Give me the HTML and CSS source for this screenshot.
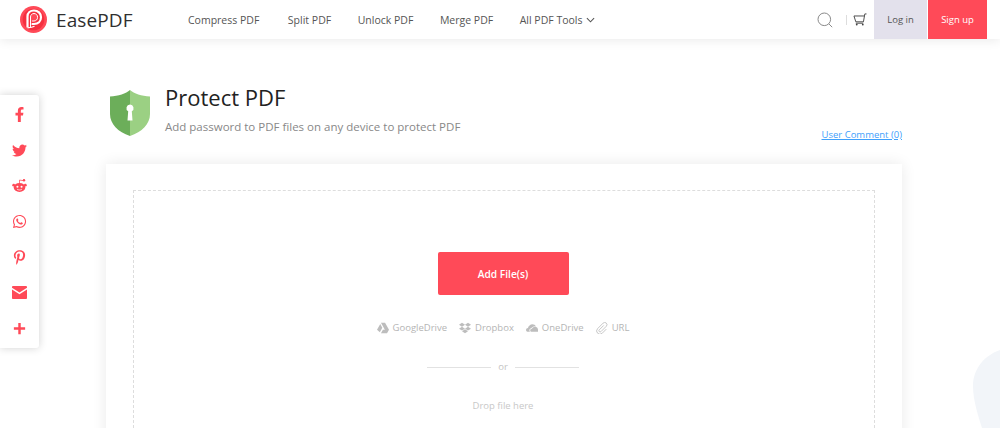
FILE: index.html
```html
<!DOCTYPE html>
<html>
<head>
    <title>Protect PDF - EasePDF</title>
    <link rel="stylesheet" href="styles.css">
</head>
<body>
    <header class="topbar">
        <a class="brand">
            <svg class="brand-logo" viewBox="0 0 27 27">
                <circle cx="13.5" cy="13.5" r="13.5" fill="#ff4a58"/>
                <circle cx="13.5" cy="13.5" r="10.800" fill="#f5303f"/>
                <path d="M7.500 21.500V10.500C7.500 6.800 10.300 4.500 14 4.500c4 0 7 2.800 7 6.800s-3 6.700-7 6.700h-2.500" fill="none" stroke="#fff" stroke-width="2.200"/>
                <path d="M7.500 21.800c3-.2 5.500-.7 7-1.500" fill="none" stroke="#fff" stroke-width="1.300"/>
                <path d="M10.500 21V11c0-2 1.500-3.500 3.500-3.500s3.600 1.600 3.600 3.800-1.600 3.700-3.600 3.700h-2" fill="#ff4a58" stroke="#fff" stroke-width="1"/>
            </svg>
            <span class="brand-name">EasePDF</span>
        </a>
        <nav class="nav">
            <a>Compress PDF</a>
            <a>Split PDF</a>
            <a>Unlock PDF</a>
            <a>Merge PDF</a>
            <a class="nav-all">All PDF Tools
                <svg class="chevron" viewBox="0 0 10 6"><path d="M1 1l4 4 4-4" fill="none" stroke="#555" stroke-width="1.200"/></svg>
            </a>
        </nav>
        <div class="top-actions">
            <svg class="icon-search" viewBox="0 0 16 16">
                <circle cx="7.300" cy="7.300" r="6.300" fill="none" stroke="#8a8a8a" stroke-width="1"/>
                <path d="M11.800 11.800l3.400 3.400" stroke="#8a8a8a" stroke-width="1"/>
            </svg>
            <span class="divider"></span>
            <svg class="icon-cart" viewBox="0 0 15 14">
                <path d="M14.500 1h-1.800l-1.500 8.500H3L1 3.200h11.200" fill="none" stroke="#444" stroke-width="1"/>
                <path d="M3 11h8" stroke="#444" stroke-width="1"/>
                <circle cx="4" cy="12.500" r="1" fill="#444"/>
                <circle cx="10.500" cy="12.500" r="1" fill="#444"/>
            </svg>
            <a class="btn-login">Log in</a>
            <a class="btn-signup">Sign up</a>
        </div>
    </header>

    <aside class="share">
        <svg viewBox="0 0 320 512"><path d="M279.14 288l14.22-92.66h-88.91v-60.13c0-25.35 12.42-50.06 52.24-50.06h40.42V6.26S260.43 0 225.36 0c-73.22 0-121.08 44.38-121.08 124.72v70.62H22.89V288h81.39v224h100.17V288z"/></svg>
        <svg viewBox="0 0 512 512"><path d="M459.37 151.716c.325 4.548.325 9.097.325 13.645 0 138.72-105.583 298.558-298.558 298.558-59.452 0-114.68-17.219-161.137-47.106 8.447.974 16.568 1.299 25.34 1.299 49.055 0 94.213-16.568 130.274-44.832-46.132-.975-84.792-31.188-98.112-72.772 6.498.974 12.995 1.624 19.818 1.624 9.421 0 18.843-1.3 27.614-3.573-48.081-9.747-84.143-51.98-84.143-102.985v-1.299c13.969 7.797 30.214 12.67 47.431 13.319-28.264-18.843-46.781-51.005-46.781-87.391 0-19.492 5.197-37.36 14.294-52.954 51.655 63.675 129.3 105.258 216.365 109.807-1.624-7.797-2.599-15.918-2.599-24.04 0-57.828 46.782-104.934 104.934-104.934 30.213 0 57.502 12.67 76.67 33.137 23.715-4.548 46.456-13.32 66.599-25.34-7.798 24.366-24.366 44.833-46.132 57.827 21.117-2.273 41.584-8.122 60.426-16.243-14.292 20.791-32.161 39.308-52.628 54.253z"/></svg>
        <svg viewBox="0 0 16 16">
            <ellipse cx="8" cy="10" rx="6.200" ry="4.800"/>
            <circle cx="1.800" cy="7.600" r="1.500"/>
            <circle cx="14.200" cy="7.600" r="1.500"/>
            <circle cx="12.800" cy="2.300" r="1.300"/>
            <path d="M8 6V2.200l4 .6" fill="none" stroke="#ff4a58" stroke-width=".8"/>
            <circle cx="5.800" cy="9.300" r="1.100" fill="#fff"/>
            <circle cx="10.200" cy="9.300" r="1.100" fill="#fff"/>
            <path d="M5.500 12c1.500 1 3.500 1 5 0" fill="none" stroke="#fff" stroke-width=".8"/>
        </svg>
        <svg viewBox="0 0 448 512"><path d="M380.9 97.1C339 55.1 283.2 32 223.900 32c-122.400 0-222 99.600-222 222 0 39.100 10.200 77.300 29.600 111L0 480l117.700-30.900c32.400 17.700 68.900 27 106.100 27h.1c122.300 0 224.100-99.600 224.100-222 0-59.300-25.200-115-67.100-157zm-157 341.600c-33.200 0-65.700-8.900-94-25.700l-6.700-4-69.800 18.300L72 359.200l-4.400-7c-18.500-29.400-28.200-63.300-28.200-98.200 0-101.700 82.800-184.500 184.600-184.500 49.300 0 95.600 19.200 130.400 54.100 34.800 34.900 56.200 81.200 56.100 130.500 0 101.800-84.900 184.600-186.600 184.600zm101.200-138.200c-5.500-2.800-32.800-16.200-37.900-18-5.100-1.900-8.800-2.800-12.500 2.800-3.700 5.600-14.300 18-17.600 21.800-3.200 3.700-6.500 4.200-12 1.400-32.600-16.300-54-29.100-75.500-66-5.700-9.800 5.700-9.100 16.300-30.300 1.800-3.700.9-6.900-.5-9.700-1.400-2.800-12.500-30.100-17.100-41.200-4.500-10.800-9.100-9.300-12.500-9.500-3.200-.2-6.900-.2-10.600-.2-3.700 0-9.700 1.400-14.800 6.900-5.100 5.600-19.400 19-19.400 46.300 0 27.300 19.900 53.700 22.600 57.400 2.800 3.700 39.100 59.700 94.800 83.800 35.200 15.200 49 16.500 66.600 13.900 10.700-1.600 32.800-13.400 37.400-26.400 4.600-13 4.600-24.100 3.200-26.400-1.300-2.500-5-3.900-10.500-6.600z"/></svg>
        <svg viewBox="0 0 384 512"><path d="M204 6.500C101.400 6.500 0 74.900 0 185.600 0 256 39.600 296 63.600 296c9.900 0 15.600-27.600 15.600-35.400 0-9.300-23.700-29.100-23.700-67.800 0-80.400 61.200-137.400 140.400-137.400 68.100 0 118.500 38.700 118.500 109.800 0 53.100-21.300 152.700-90.300 152.700-24.900 0-46.200-18-46.200-43.800 0-37.800 26.400-74.400 26.400-113.400 0-66.200-93.900-54.200-93.900 25.800 0 16.800 2.100 35.400 9.600 50.700-13.800 59.400-42 147.900-42 209.100 0 18.900 2.700 37.500 4.500 56.400 3.400 3.800 1.700 3.400 6.900 1.500 50.400-69 48.600-82.500 71.400-172.800 12.300 23.400 44.100 36 69.300 36 106.200 0 153.900-103.500 153.900-196.800C384 71.300 298.200 6.500 204 6.500z"/></svg>
        <svg viewBox="0 0 16 14"><path d="M1.200 0h13.600C15.500 0 16 .5 16 1.200v.6L8 7 0 1.800v-.6C0 .5.500 0 1.200 0zM0 3.800l8 5 8-5v9C16 13.500 15.500 14 14.800 14H1.200C.5 14 0 13.500 0 12.800z"/></svg>
        <svg viewBox="-2 -2 16 16"><path d="M4.700 0h2.600v4.700H12v2.600H7.300V12H4.700V7.300H0V4.700h4.700z"/></svg>
    </aside>

    <main class="page">
        <section class="tool-head">
            <svg class="shield" viewBox="0 0 40 46">
                <path d="M20 0c4 3.500 11.500 6 20 6.500V24c0 10-8 18-20 22z" fill="#9bd083"/>
                <path d="M20 0C16 3.500 8.500 6 0 6.500V24c0 10 8 18 20 22z" fill="#6cae5a"/>
                <path d="M20 14.500a3.600 3.600 0 0 1 1.800 6.700l.7 9.300h-5l.7-9.300A3.600 3.600 0 0 1 20 14.500z" fill="#fff"/>
            </svg>
            <div class="tool-text">
                <h1>Protect PDF</h1>
                <p>Add password to PDF files on any device to protect PDF</p>
            </div>
            <a class="comment-link">User Comment (0)</a>
        </section>

        <section class="card">
            <div class="dropzone">
                <button class="add-btn">Add File(s)</button>
                <div class="sources">
                    <span class="source">
                        <svg viewBox="0 0 14 12"><path d="M4.600 0h4.800l4.600 8H9.200zM3.800 1.400L6.200 5.600 3.300 11 .0 8zM4.600 12l2.300-4h7.100l-2.300 4z" fill="#bdbdbd"/></svg>
                        GoogleDrive
                    </span>
                    <span class="source">
                        <svg viewBox="0 0 14 12"><path d="M3.500 0L7 2.200 3.500 4.500 0 2.200zM10.500 0L14 2.200l-3.500 2.300L7 2.200zM3.500 4.500L7 6.800 3.500 9 0 6.800zM10.500 4.500L14 6.800 10.500 9 7 6.800zM3.500 9.800L7 7.600l3.500 2.200L7 12z" fill="#bdbdbd"/></svg>
                        Dropbox
                    </span>
                    <span class="source">
                        <svg viewBox="0 0 14 10"><path d="M3 9.500C1.300 9.500 0 8.500 0 7.200c0-1.200 1-2.100 2.300-2.200C2.800 2.500 5 .5 7.500.5c1.800 0 3.300 1 4 2.500-2.400-.4-4.800.8-5.500 2.700-1.300 0-2 .8-2 2 0 .7.200 1.300.6 1.800zM5.800 9.500c-.6-.4-.9-1-.9-1.700 0-1 .9-1.600 1.900-1.500.3-1.600 1.900-2.800 3.700-2.800 1.300 0 2.400.6 3 1.700.3.600.5 1.200.5 1.800V9.500z" fill="#bdbdbd"/></svg>
                        OneDrive
                    </span>
                    <span class="source">
                        <svg viewBox="0 0 14 14"><path d="M9 4l-5.200 5.200a1.400 1.400 0 0 0 2 2l6.200-6.200a2.600 2.600 0 0 0-3.700-3.700L1.900 7.700a3.800 3.800 0 0 0 5.400 5.400L12 8.300" fill="none" stroke="#bdbdbd" stroke-width="1"/></svg>
                        URL
                    </span>
                </div>
                <div class="or-line"><span>or</span></div>
                <p class="drop-hint">Drop file here</p>
            </div>
        </section>
    </main>

    <svg class="blob" viewBox="0 0 27 78"><path d="M27 0C10 6 0 20 0 36c0 14 5 29 9 42h18z" fill="#f2f5f9"/></svg>
</body>
</html>
```

FILE: styles.css
```css
html, body {
    height: 100%;
}
body {
    margin: 0;
    font-family: "Open Sans", sans-serif;
    background-color: #fff;
    color: #333;
    overflow: hidden;
}
a {
    text-decoration: none;
    color: inherit;
}
.topbar {
    position: relative;
    z-index: 2;
    display: flex;
    align-items: center;
    height: 39px;
    padding-left: 20px;
    background-color: #fff;
    box-shadow: 0px 2px 10px rgba(0, 0, 0, 0.08);
}
.brand {
    display: flex;
    align-items: center;
    width: 168px;
}
.brand-logo {
    width: 27px;
    height: 27px;
}
.brand-name {
    margin-left: 9px;
    font-size: 19px;
    color: #2f2f2f;
    letter-spacing: 0.1px;
}
.nav {
    display: flex;
    gap: 26.5px;
    font-size: 10.5px;
    color: #555;
}
.nav a:first-child {
    margin-right: 2px;
}
.nav-all {
    display: flex;
    align-items: center;
    gap: 3px;
}
.chevron {
    width: 9px;
    height: 6px;
}
.top-actions {
    display: flex;
    align-items: center;
    height: 39px;
    margin-left: auto;
    margin-right: 13px;
}
.icon-search {
    width: 16px;
    height: 16px;
}
.divider {
    width: 1px;
    height: 10px;
    margin: 0 6px 0 13px;
    background-color: #ddd;
}
.icon-cart {
    width: 14px;
    height: 13px;
    margin-right: 7px;
}
.btn-login,
.btn-signup {
    display: flex;
    align-items: center;
    justify-content: center;
    height: 39px;
    font-size: 9.5px;
}
.btn-login {
    width: 53px;
    margin-right: 1px;
    background-color: #e3e1ec;
    color: #555;
}
.btn-signup {
    width: 59px;
    background-color: #ff4a58;
    color: #fff;
}
.share {
    position: absolute;
    z-index: 1;
    top: 95px;
    left: 0;
    display: flex;
    flex-direction: column;
    align-items: center;
    justify-content: space-between;
    box-sizing: border-box;
    width: 39px;
    height: 253px;
    padding: 12px 0 12px;
    background-color: #fff;
    border-radius: 0 3px 3px 0;
    box-shadow: 0px 0px 8px rgba(0, 0, 0, 0.18);
}
.share svg {
    width: 15px;
    height: 15px;
    fill: #ff4a58;
}
.page {
    position: relative;
    z-index: 1;
    padding: 0 98px 0 106px;
}
.tool-head {
    display: flex;
    align-items: flex-start;
    height: 125px;
    padding-top: 51px;
    box-sizing: border-box;
}
.shield {
    width: 40px;
    height: 46px;
    margin-left: 4px;
}
.tool-text {
    margin-left: 15px;
}
.tool-text h1 {
    margin: -8px 0 0;
    font-size: 22px;
    font-weight: 400;
    line-height: 30px;
    color: #222;
}
.tool-text p {
    margin: 6px 0 0;
    font-size: 11.5px;
    line-height: 17px;
    color: #888;
}
.comment-link {
    margin-left: auto;
    margin-top: 38px;
    font-size: 9.5px;
    line-height: 14px;
    color: #3fa0fb;
    text-decoration: underline;
}
.card {
    height: 300px;
    padding: 26px 27px;
    background-color: #fff;
    box-shadow: 0px 0px 14px rgba(0, 0, 0, 0.09);
}
.dropzone {
    display: flex;
    flex-direction: column;
    align-items: center;
    height: 100%;
    padding: 61px 2px 0 0;
    border: 1px dashed #ddd;
}
.add-btn {
    width: 131px;
    height: 43px;
    border: none;
    border-radius: 2px;
    background-color: #ff4a58;
    color: #fff;
    font-family: inherit;
    font-size: 10.2px;
    font-weight: 600;
}
.sources {
    display: flex;
    gap: 12px;
    margin-top: 25px;
    font-size: 9.5px;
    line-height: 16px;
    color: #b5b5b5;
}
.source {
    display: flex;
    align-items: center;
    gap: 4px;
}
.source svg {
    width: 12px;
    height: 12px;
}
.or-line {
    display: flex;
    align-items: center;
    width: 152px;
    margin-top: 23px;
    font-size: 9.5px;
    line-height: 16px;
    color: #c4c4c4;
}
.or-line span {
    padding: 0 7px;
}
.or-line::before,
.or-line::after {
    content: "";
    flex: 1;
    height: 1px;
    background-color: #e2e2e2;
}
.drop-hint {
    margin: 23px 0 0;
    font-size: 9.5px;
    line-height: 16px;
    color: #c8c8c8;
}
.blob {
    position: absolute;
    top: 350px;
    left: 973px;
    width: 27px;
    height: 78px;
}
```
